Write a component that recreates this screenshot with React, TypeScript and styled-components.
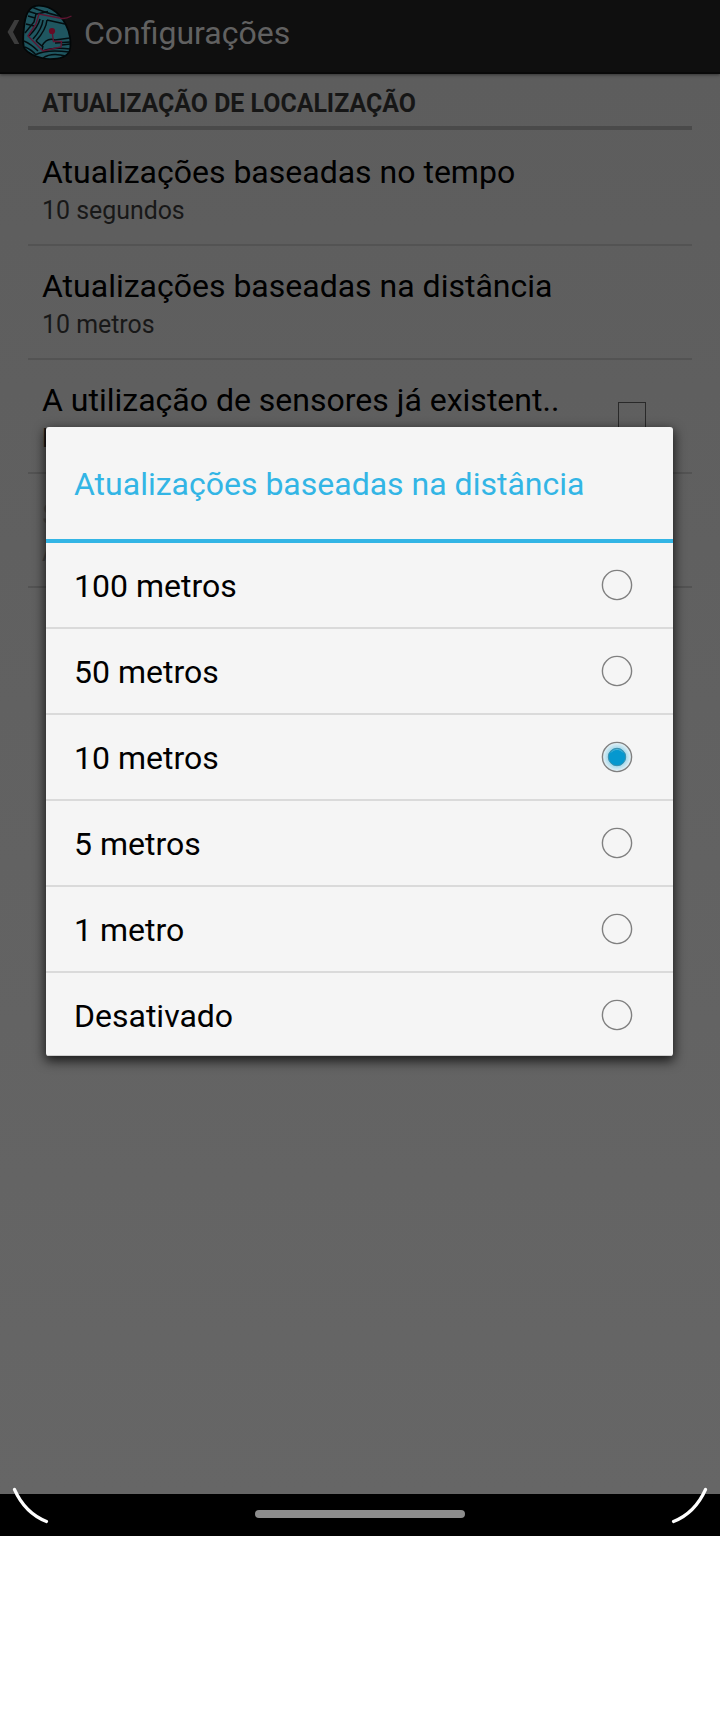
import React from 'react';
import styled, { createGlobalStyle } from 'styled-components';

const GlobalStyle = createGlobalStyle`
  * { box-sizing: border-box; }
  body { margin: 0; background: #fff; font-family: Roboto, sans-serif; }
`;

const Screen = styled.main`
  position: relative;
  width: 720px;
  height: 1536px;
  display: flex;
  flex-direction: column;
  overflow: hidden;
`;

const ActionBar = styled.header`
  height: 74px;
  flex: none;
  display: flex;
  align-items: flex-start;
  background: #0f0f0f;
  border-bottom: 2px solid #090909;
  box-shadow: 0 1px 3px rgba(0, 0, 0, 0.45);
  z-index: 1;
`;

const HomeArt = styled.svg`
  width: 76px;
  height: 64px;
  flex: none;
`;

const BarTitle = styled.h1`
  margin: 0;
  padding-left: 8px;
  font-size: 32px;
  font-weight: 400;
  line-height: 66px;
  color: #616161;
`;

const Preferences = styled.section`
  flex: 1;
  padding: 0 28px;
  background: linear-gradient(#5d5d5d, #666);
`;

const Category = styled.h2`
  margin: 0 0 2px;
  height: 56px;
  padding: 15px 14px 0;
  border-bottom: 4px solid #4a4a4a;
  font-size: 24.9px;
  line-height: 30px;
  font-weight: 700;
  color: #161616;
`;

const Preference = styled.div<{ $disabled?: boolean }>`
  height: 114px;
  padding: 20px 14px 0;
  display: flex;
  justify-content: space-between;
  border-bottom: 2px solid #535353;
  color: ${(p) => (p.$disabled ? '#4c4c4c' : '#000')};
`;

const PreferenceTitle = styled.div`
  font-size: 32px;
  line-height: 40px;
  white-space: nowrap;
`;

const PreferenceSummary = styled.div<{ $disabled?: boolean }>`
  font-size: 24.9px;
  line-height: 34px;
  margin-top: 2px;
  color: ${(p) => (p.$disabled ? '#454545' : '#181818')};
`;

const CheckBox = styled.span`
  width: 28px;
  height: 28px;
  margin: 22px 32px 0 0;
  border: 1px solid #292929;
`;

const Dialog = styled.section`
  position: absolute;
  left: 46px;
  top: 427px;
  width: 627px;
  height: 629px;
  overflow: hidden;
  border-radius: 3px;
  background: #f5f5f5;
`;

const DialogShadow = styled.div`
  position: absolute;
  left: 46px;
  top: 427px;
  width: 627px;
  height: 629px;
  border-radius: 3px;
  box-shadow: 0 4px 12px 1px rgba(0, 0, 0, 0.75);
`;

const DialogTitle = styled.h2`
  margin: 0;
  height: 116px;
  padding-left: 28px;
  border-bottom: 4px solid #33b5e5;
  font-size: 32px;
  font-weight: 400;
  line-height: 114px;
  color: #33b5e5;
`;

const Option = styled.div`
  height: 86px;
  padding: 0 40px 0 28px;
  display: flex;
  align-items: center;
  justify-content: space-between;
  border-bottom: 2px solid #dadada;
  font-size: 32px;
  color: #000;

  &:last-child {
    height: 83px;
    padding-top: 2px;
    border-bottom: 1px solid #cfcfcf;
  }
`;

const OptionLabel = styled.span`
  padding-top: 2px;
`;

const RadioArt = styled.svg`
  width: 32px;
  height: 32px;
`;

const NavigationBar = styled.footer`
  height: 42px;
  flex: none;
  display: flex;
  justify-content: center;
  padding-top: 16px;
  background: #000;
`;

const HomeHandle = styled.span`
  width: 210px;
  height: 8px;
  border-radius: 4px;
  background: #8d8d8d;
`;

const CornerMarks = styled.svg`
  position: absolute;
  left: 0;
  bottom: 0;
  width: 720px;
  height: 56px;
`;

const preferences = [
  { title: 'Atualizações baseadas no tempo', summary: '10 segundos' },
  { title: 'Atualizações baseadas na distância', summary: '10 metros' },
  { title: 'A utilização de sensores já existent..', summary: 'D', checkable: true },
  { title: 'S', summary: 'A', disabled: true },
];

const options = ['100 metros', '50 metros', '10 metros', '5 metros', '1 metro', 'Desativado'];

function Radio({ checked }: { checked: boolean }) {
  return (
    <RadioArt viewBox="0 0 32 32">
      <defs>
        <radialGradient id="glow">
          <stop offset="0.55" stopColor="#9bd5ea" />
          <stop offset="1" stopColor="#ebf3f6" />
        </radialGradient>
      </defs>
      <circle cx="16" cy="16" r="14.6" fill={checked ? 'url(#glow)' : 'none'} stroke="#808080" strokeWidth="1.4" />
      {checked && (
        <>
          <circle cx="16" cy="16" r="8.7" fill="#0598cf" stroke="#3b8fac" strokeWidth="1" />
          <path d="M10 11.5a7.5 7.5 0 0 1 12 0" fill="none" stroke="#53b5d6" strokeWidth="1" />
        </>
      )}
    </RadioArt>
  );
}

function HomeIcon() {
  return (
    <HomeArt viewBox="0 0 76 64" fill="none">
      <path d="M14.5 20h4.8L13 32l6.3 12h-4.8L7.5 32Z" fill="#3c3c3c" />
      <path
        d="M36 5.800C43 5 51 8 56 12C62 17 66 24 68.500 31C70.500 38 71 46 69.500 51C67 57 60 59 50 59C41 59 30 55 25 49C22 45 23 37 24 28C25 16 28 7 36 5.800Z"
        fill="#1f5660"
        stroke="#030708"
        strokeWidth="1.7"
      />
      <g stroke="#030d10" strokeWidth="1.5">
        <path d="M33 7.500Q43 12 59 16M29 11.500L37 14L48 11.500M28 16L35 18M26 24L34 26M36 14L34 22L25 33" />
        <path d="M40 19Q38 27 29 36M47 20Q46 30 36 41M43 20Q42 29 33 39M47 20Q56 22 65 24" />
        <path d="M24 41Q31 44 38 51M25 47Q32 50 36 55M36 41L42 46Q47 37 55 40L70 38M43 46L42 50M55 43L70 42M62 45L70 44M43 51Q53 47 70 49M35 55Q46 49 69 52M43 58Q51 52 66 56" />
      </g>
      <path d="M71.500 16Q66 19 62 18.500L39 14L36 24L28 36L43 51L61 47L61.500 41.500H53.500L52 31" stroke="#5d1431" strokeWidth="1.4" />
      <circle cx="52" cy="31" r="3.100" fill="#660b25" />
    </HomeArt>
  );
}

export default function App() {
  return (
    <>
      <GlobalStyle />
      <Screen>
        <ActionBar>
          <HomeIcon />
          <BarTitle>Configurações</BarTitle>
        </ActionBar>
        <Preferences>
          <Category>ATUALIZAÇÃO DE LOCALIZAÇÃO</Category>
          {preferences.map((item) => (
            <Preference key={item.title} $disabled={item.disabled}>
              <div>
                <PreferenceTitle>{item.title}</PreferenceTitle>
                <PreferenceSummary $disabled={item.disabled}>{item.summary}</PreferenceSummary>
              </div>
              {item.checkable && <CheckBox />}
            </Preference>
          ))}
        </Preferences>
        <NavigationBar>
          <HomeHandle />
        </NavigationBar>
        <CornerMarks viewBox="0 0 720 56" fill="none" stroke="#fff" strokeWidth="3.200" strokeLinecap="round">
          <path d="M14.500 9.500Q25 33 46.500 41.500M705.500 9.500Q695 33 673.500 41.500" />
        </CornerMarks>
        <DialogShadow />
        <Dialog role="dialog">
          <DialogTitle>Atualizações baseadas na distância</DialogTitle>
          {options.map((label) => (
            <Option key={label}>
              <OptionLabel>{label}</OptionLabel>
              <Radio checked={label === '10 metros'} />
            </Option>
          ))}
        </Dialog>
      </Screen>
    </>
  );
}
